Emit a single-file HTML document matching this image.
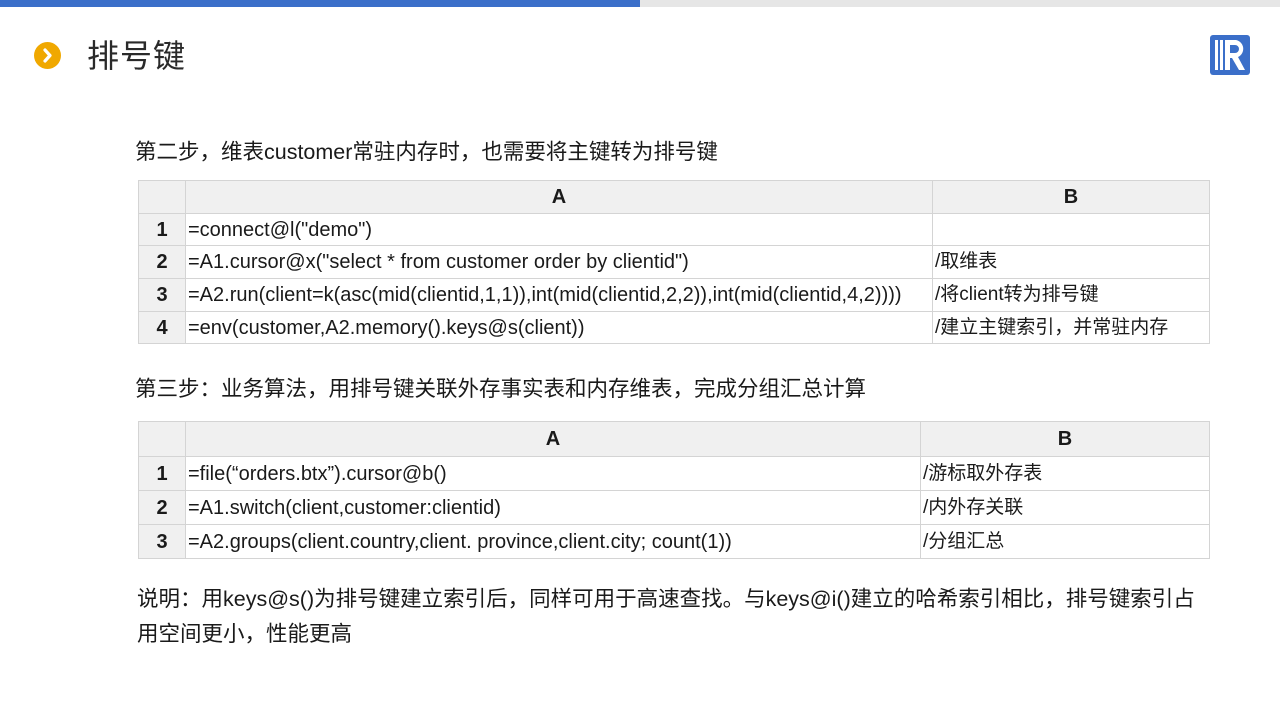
<!DOCTYPE html>
<html><head><meta charset="utf-8"><style>
*{margin:0;padding:0;box-sizing:border-box}
body{width:1280px;height:720px;background:#fff;position:relative;overflow:hidden;font-family:"Liberation Sans","Noto Sans CJK SC",sans-serif;color:#1a1a1a}
.bar1{position:absolute;left:0;top:0;width:640px;height:7px;background:#3b6fc9}
.bar2{position:absolute;left:640px;top:0;width:640px;height:7px;background:#e6e6e6}
.dot{position:absolute;left:34px;top:42px;width:27px;height:27px;border-radius:50%;background:#f0a800}
.title{position:absolute;left:87px;top:35px;font-size:32px;color:#2a2a2a;line-height:42px;letter-spacing:1px}
.p{position:absolute;font-size:21.5px;line-height:32px;white-space:nowrap}
table{position:absolute;border-collapse:collapse;font-size:20px;table-layout:fixed}
td{border:1px solid #d4d4d4;padding:0 0 0 2px;white-space:nowrap;line-height:22px;vertical-align:middle;overflow:hidden}
td.n{background:#f0f0f0;text-align:center;font-weight:bold;padding:0}
tr.h td{background:#f0f0f0;text-align:center;font-weight:bold;padding:0}
.c{font-size:19px}
</style></head><body>
<div class="bar1"></div><div class="bar2"></div>
<div class="dot"><svg width="27" height="27"><path d="M11 8 L16 13.5 L11 19" stroke="#fff" stroke-width="3.2" fill="none" stroke-linecap="round" stroke-linejoin="round"/></svg></div>
<div class="title">排号键</div>
<svg style="position:absolute;left:1210px;top:35px" width="40" height="40" viewBox="0 0 40 40"><rect x="0" y="0" width="40" height="40" rx="3" fill="#3b6fc9"/><rect x="5" y="5" width="3" height="30" fill="#fff"/><rect x="10" y="5" width="3" height="30" fill="#fff"/><path d="M15 5 H26 A9 9 0 0 1 28 22 L35 35 H29 L22 23 H20 V18 H25 A4 4 0 0 0 25 10 H20 V35 H15 Z" fill="#fff"/></svg>
<div class="p" style="left:135px;top:136px">第二步，维表customer常驻内存时，也需要将主键转为排号键</div>
<table style="left:138px;top:180px;width:1072px">
<tr class="h" style="height:33px"><td style="width:47px"></td><td style="width:747px">A</td><td>B</td></tr>
<tr style="height:32px"><td class="n">1</td><td>=connect@l("demo")</td><td></td></tr>
<tr style="height:33px"><td class="n">2</td><td>=A1.cursor@x("select * from customer order by clientid")</td><td class="c">/取维表</td></tr>
<tr style="height:33px"><td class="n">3</td><td>=A2.run(client=k(asc(mid(clientid,1,1)),int(mid(clientid,2,2)),int(mid(clientid,4,2))))</td><td class="c">/将client转为排号键</td></tr>
<tr style="height:32px"><td class="n">4</td><td>=env(customer,A2.memory().keys@s(client))</td><td class="c">/建立主键索引，并常驻内存</td></tr>
</table>
<div class="p" style="left:135px;top:373px">第三步：业务算法，用排号键关联外存事实表和内存维表，完成分组汇总计算</div>
<table style="left:138px;top:421px;width:1072px">
<tr class="h" style="height:35px"><td style="width:47px"></td><td style="width:735px">A</td><td>B</td></tr>
<tr style="height:34px"><td class="n">1</td><td>=file(“orders.btx”).cursor@b()</td><td class="c">/游标取外存表</td></tr>
<tr style="height:34px"><td class="n">2</td><td>=A1.switch(client,customer:clientid)</td><td class="c">/内外存关联</td></tr>
<tr style="height:34px"><td class="n">3</td><td>=A2.groups(client.country,client. province,client.city; count(1))</td><td class="c">/分组汇总</td></tr>
</table>
<div class="p" style="left:137px;top:582px;line-height:35px">说明：用keys@s()为排号键建立索引后，同样可用于高速查找。与keys@i()建立的哈希索引相比，排号键索引占<br>用空间更小，性能更高</div>
</body></html>
